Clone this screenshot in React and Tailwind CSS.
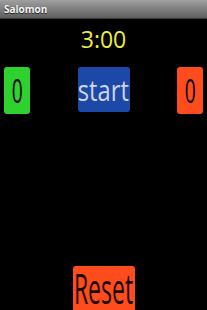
export default function App() {
  return (
    <div className="w-[207px] h-[310px] overflow-hidden bg-black flex flex-col font-['Open_Sans',sans-serif]">
      <div className="h-[19px] shrink-0 bg-gradient-to-b from-[#a0a0a0] to-[#5e5e5e] border-b border-[#3a3a3a] flex items-center px-[4px]">
        <span className="text-[10px] font-bold text-[#f2f2f2] leading-none [text-shadow:0_1px_1px_#222]">Salomon</span>
      </div>

      <div className="mt-[9px] text-center text-[23px] leading-none text-[#eded3c] h-[22px]">3:00</div>

      <div className="mt-[17px] flex justify-between items-start px-[4px]">
        <button className="w-[26px] h-[47px] rounded-[3px] bg-[#2ed12e] flex items-center justify-center">
          <span className="inline-block text-[32px] leading-none text-black scale-x-[0.6]">0</span>
        </button>
        <button className="w-[52px] h-[45px] rounded-[3px] bg-[#1c48a8] flex items-center justify-center">
          <span className="inline-block text-[30px] leading-none text-[#cfd5ea] scale-x-[0.79] whitespace-nowrap">start</span>
        </button>
        <button className="w-[26px] h-[47px] rounded-[3px] bg-[#ff4c1c] flex items-center justify-center">
          <span className="inline-block text-[32px] leading-none text-black scale-x-[0.6]">0</span>
        </button>
      </div>

      <div className="mt-auto flex justify-center">
        <button className="w-[62px] h-[44px] rounded-t-[3px] bg-[#ff4c1c] flex justify-center items-start pt-[11px]">
          <span className="inline-block text-[23px] leading-none text-[#1a0a05] scale-y-[1.83] whitespace-nowrap">Reset</span>
        </button>
      </div>
    </div>
  )
}
